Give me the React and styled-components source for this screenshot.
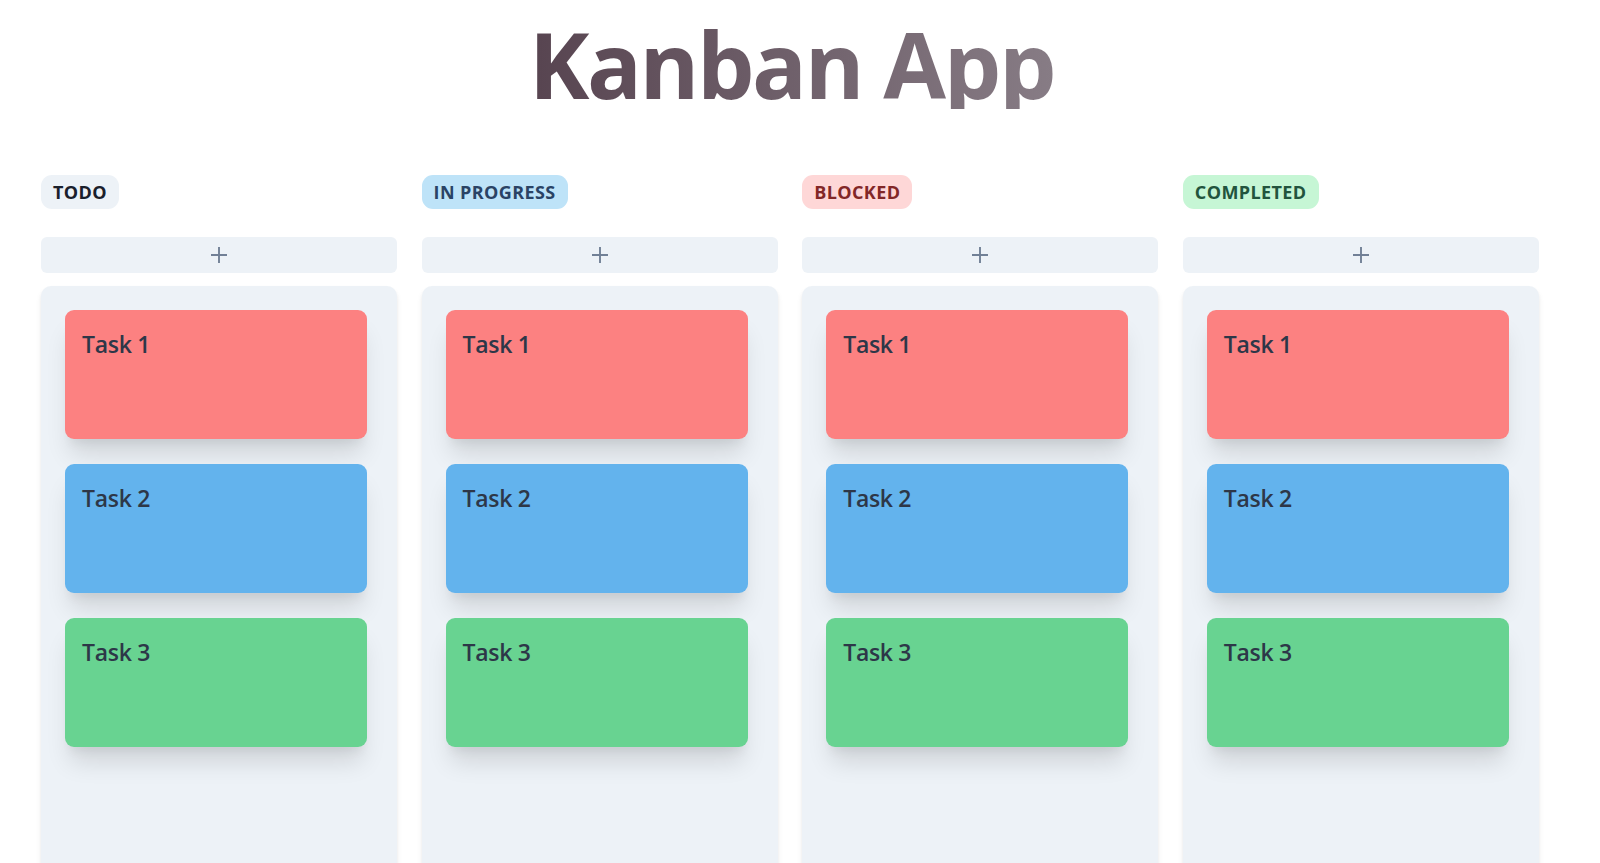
import styled, { createGlobalStyle } from "styled-components";

const GlobalStyle = createGlobalStyle`
  html, body {
    margin: 0;
    padding: 0;
    overflow: hidden;
    background: #ffffff;
  }
  * {
    box-sizing: border-box;
  }
`;

const Page = styled.div`
  width: 1583px;
  font-family: "Open Sans", "Noto Sans", sans-serif;
  color: #2d3748;
`;

const Title = styled.h1`
  margin: 19px auto 0;
  font-size: 91px;
  line-height: 90px;
  font-weight: 700;
  letter-spacing: -2.4px;
  text-align: center;
  background: linear-gradient(to right, #574450, #877c85);
  -webkit-background-clip: text;
  background-clip: text;
  color: transparent;
  width: fit-content;
`;

const Board = styled.div`
  display: grid;
  grid-template-columns: repeat(4, 356px);
  column-gap: 24.6px;
  padding-left: 41px;
  margin-top: 66px;
`;

const Column = styled.section`
  display: flex;
  flex-direction: column;
`;

const badgeColors = {
  todo: { bg: "#edf2f7", fg: "#1a202c" },
  progress: { bg: "#bee3f8", fg: "#2a4365" },
  blocked: { bg: "#fed7d7", fg: "#822727" },
  completed: { bg: "#c6f6d5", fg: "#22543d" },
};

const Badge = styled.span`
  align-self: flex-start;
  height: 34px;
  line-height: 34px;
  padding: 0 12px;
  border-radius: 11px;
  font-size: 18px;
  font-weight: 700;
  letter-spacing: 0.4px;
  text-transform: uppercase;
  background: ${(p) => badgeColors[p.$variant].bg};
  color: ${(p) => badgeColors[p.$variant].fg};
`;

const AddButton = styled.button`
  margin-top: 28px;
  height: 36px;
  width: 100%;
  border: none;
  border-radius: 6px;
  background: #edf2f7;
  display: flex;
  align-items: center;
  justify-content: center;
  padding: 0;
  cursor: pointer;
`;

const ColumnBody = styled.div`
  margin-top: 13px;
  height: 640px;
  background: #edf2f7;
  border-radius: 10px;
  padding: 24px 30px 24px 24px;
  display: flex;
  flex-direction: column;
  gap: 25px;
  box-shadow: 0 4px 6px -1px rgba(0, 0, 0, 0.1),
    0 2px 4px -1px rgba(0, 0, 0, 0.06);
`;

const cardColors = {
  red: "#fc8181",
  blue: "#63b3ed",
  green: "#68d391",
};

const Card = styled.div`
  height: 129px;
  border-radius: 9px;
  padding: 17px 16px 16px 17px;
  background: ${(p) => cardColors[p.$color]};
  box-shadow: 0 20px 25px -5px rgba(0, 0, 0, 0.12),
    0 10px 10px -5px rgba(0, 0, 0, 0.05);
  font-size: 23px;
  line-height: 1.5;
  font-weight: 600;
  letter-spacing: -0.3px;
  color: #2d3748;
`;

const PlusIcon = () => (
  <svg width="18" height="18" viewBox="0 0 18 18" fill="none">
    <path d="M9 1v16M1 9h16" stroke="#718096" strokeWidth="1.9" />
  </svg>
);

const columns = [
  { title: "Todo", variant: "todo" },
  { title: "In Progress", variant: "progress" },
  { title: "Blocked", variant: "blocked" },
  { title: "Completed", variant: "completed" },
];

const tasks = [
  { name: "Task 1", color: "red" },
  { name: "Task 2", color: "blue" },
  { name: "Task 3", color: "green" },
];

export default function App() {
  return (
    <Page>
      <GlobalStyle />
      <Title>Kanban App</Title>
      <Board>
        {columns.map((col) => (
          <Column key={col.variant}>
            <Badge $variant={col.variant}>{col.title}</Badge>
            <AddButton aria-label="Add task">
              <PlusIcon />
            </AddButton>
            <ColumnBody>
              {tasks.map((t) => (
                <Card key={t.name} $color={t.color}>
                  {t.name}
                </Card>
              ))}
            </ColumnBody>
          </Column>
        ))}
      </Board>
    </Page>
  );
}
